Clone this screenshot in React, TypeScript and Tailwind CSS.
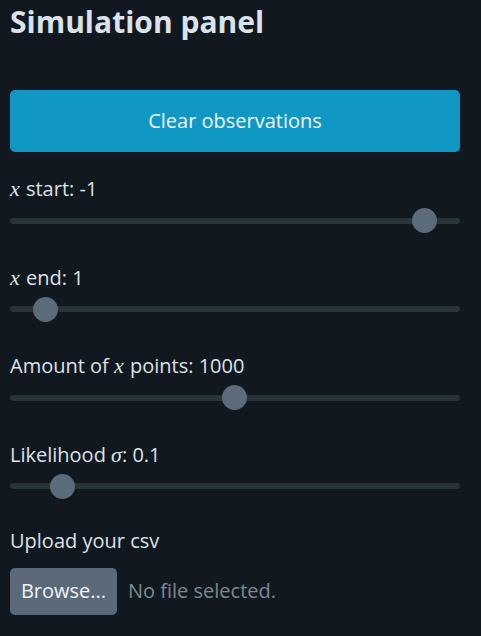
import React from "react";

const X = () => (
  <span style={{ fontFamily: "'Liberation Serif', serif" }} className="mr-[1px] text-[22px] italic leading-none">x</span>
);
const Sigma = () => (
  <span style={{ fontFamily: "'Liberation Serif', serif" }} className="text-[22px] italic leading-none">σ</span>
);

function Slider({ frac }: { frac: number }) {
  return (
    <div className="relative h-[25px] w-[450px] flex items-center">
      <div className="h-[6px] w-full rounded-full bg-[#29333c]" />
      <div
        className="absolute top-0 h-[25px] w-[25px] rounded-full bg-[#5b6b79]"
        style={{ left: `${frac * 425}px` }}
      />
    </div>
  );
}

function Field({ label, frac }: { label: React.ReactNode; frac: number }) {
  return (
    <div className="flex flex-col">
      <div className="h-[26px] text-[20px] leading-[26px] text-[#dee2e6]">{label}</div>
      <div className="mt-[6px]">
        <Slider frac={frac} />
      </div>
    </div>
  );
}

export default function App() {
  return (
    <div
      className="min-h-[636px] w-[481px] bg-[#121820] px-[10px] pt-[3px]"
      style={{ fontFamily: "'Open Sans', sans-serif" }}
    >
      <h2 className="h-[38px] text-[30px] font-bold leading-[38px] text-[#dbe3ea]">Simulation panel</h2>
      <button className="mt-[49px] h-[62px] w-[450px] rounded-[5px] bg-[#1197c4] text-[20px] text-[#f1f6f9]">
        Clear observations
      </button>
      <div className="mt-[24px] flex flex-col gap-[31.67px]">
        <Field label={<><X /> start: -1</>} frac={0.945} />
        <Field label={<><X /> end: 1</>} frac={0.053} />
        <Field label={<>Amount of <X /> points: 1000</>} frac={0.498} />
        <Field label={<>Likelihood <Sigma />: 0.1</>} frac={0.093} />
        <div className="-mt-[3px] flex flex-col">
          <div className="h-[26px] text-[20px] leading-[26px] text-[#dee2e6]">Upload your csv</div>
          <div className="mt-[14px] flex items-center gap-[11px]">
            <div className="flex h-[47px] w-[107px] items-center justify-center rounded-[5px] bg-[#5a6a78] text-[20px] text-[#f1f4f7]">
              Browse...
            </div>
            <span className="text-[20px] text-[#7d8893]">No file selected.</span>
          </div>
        </div>
      </div>
    </div>
  );
}
